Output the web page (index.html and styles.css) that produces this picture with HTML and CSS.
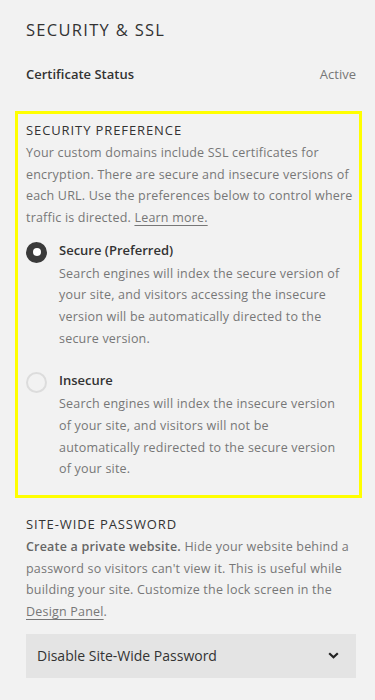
FILE: index.html
```html
<!DOCTYPE html>
<html lang="en">
<head>
<meta charset="utf-8">
<title>Security &amp; SSL</title>
<link rel="stylesheet" href="styles.css">
</head>
<body>
<div class="page">
  <h1 class="title">SECURITY &amp; SSL</h1>
  <div class="status-row">
    <span class="status-label">Certificate Status</span>
    <span class="status-value">Active</span>
  </div>

  <section class="pref-box">
    <h2 class="section-heading">SECURITY PREFERENCE</h2>
    <p class="desc">Your custom domains include SSL certificates for encryption. There are secure and insecure versions of each URL. Use the preferences below to control where traffic is directed. <a class="link" href="#">Learn more.</a></p>

    <div class="option">
      <span class="radio radio-on"></span>
      <div class="option-body">
        <div class="option-label">Secure (Preferred)</div>
        <p class="desc">Search engines will index the secure version of your site, and visitors accessing the insecure version will be automatically directed to the secure version.</p>
      </div>
    </div>

    <div class="option option-second">
      <span class="radio"></span>
      <div class="option-body">
        <div class="option-label">Insecure</div>
        <p class="desc">Search engines will index the insecure version of your site, and visitors will not be automatically redirected to the secure version of your site.</p>
      </div>
    </div>
  </section>

  <section class="password">
    <h2 class="section-heading">SITE-WIDE PASSWORD</h2>
    <p class="desc"><strong class="strong">Create a private website.</strong> Hide your website behind a password so visitors can't view it. This is useful while building your site. Customize the lock screen in the <a class="link" href="#">Design Panel</a>.</p>
    <div class="select">
      <span class="select-text">Disable Site-Wide Password</span>
      <svg class="chevron" width="11" height="7" viewBox="0 0 11 7"><path d="M1.2 1.2 L5.5 5.3 L9.8 1.2" fill="none" stroke="#222" stroke-width="2.2"/></svg>
    </div>
  </section>
</div>
</body>
</html>
```

FILE: styles.css
```css
html, body {
  margin: 0;
  padding: 0;
  background: #f2f2f2;
}
body {
  font-family: "Open Sans", "Liberation Sans", sans-serif;
  color: #333;
}
.page {
  padding: 20px 19px 0 26px;
}
.title {
  margin: 0;
  font-size: 16.5px;
  line-height: 20px;
  font-weight: 500;
  color: #333;
  letter-spacing: 1.3px;
}
.status-row {
  display: flex;
  justify-content: space-between;
  margin-top: 24px;
  font-size: 13px;
  line-height: 20px;
}
.status-label {
  font-weight: 600;
  color: #333;
}
.status-value {
  color: #777;
}
.pref-box {
  margin: 27px -6px 0 -11px;
  border: 3px solid #ffff00;
  padding: 7px 3px 15px 8px;
}
.section-heading {
  margin: 0;
  font-size: 13px;
  line-height: 18px;
  font-weight: 500;
  color: #333;
  letter-spacing: 0.9px;
}
.desc {
  margin: 3px 0 0;
  font-size: 12.5px;
  line-height: 21.67px;
  letter-spacing: 0.2px;
  color: #777;
}
.link {
  color: #777;
  text-decoration: underline;
  text-underline-offset: 3px;
}
.strong {
  font-weight: 600;
  color: #666;
}
.option {
  display: flex;
  gap: 12px;
  margin-top: 11px;
}
.option-second {
  margin-top: 21px;
}
.radio {
  flex: 0 0 auto;
  width: 21px;
  height: 21px;
  box-sizing: border-box;
  border-radius: 50%;
  border: 2px solid #dcdcdc;
  margin-top: 2px;
  display: flex;
  align-items: center;
  justify-content: center;
}
.radio-on {
  background: #3a3a3a;
  border-color: #3a3a3a;
}
.radio-on::after {
  content: "";
  width: 8px;
  height: 8px;
  border-radius: 50%;
  background: #fff;
}
.option-body {
  flex: 1;
  margin-right: 10px;
}
.option-label {
  font-size: 13px;
  line-height: 20px;
  font-weight: 600;
  color: #333;
}
.option-body .desc {
  margin-top: 3px;
}
.password {
  margin-top: 17px;
}
.select {
  margin-top: 11px;
  height: 44px;
  background: #e4e4e4;
  display: flex;
  align-items: center;
  justify-content: space-between;
  padding: 0 17px 0 11px;
}
.select-text {
  font-size: 14px;
  color: #333;
}
.chevron {
  display: block;
}
```
